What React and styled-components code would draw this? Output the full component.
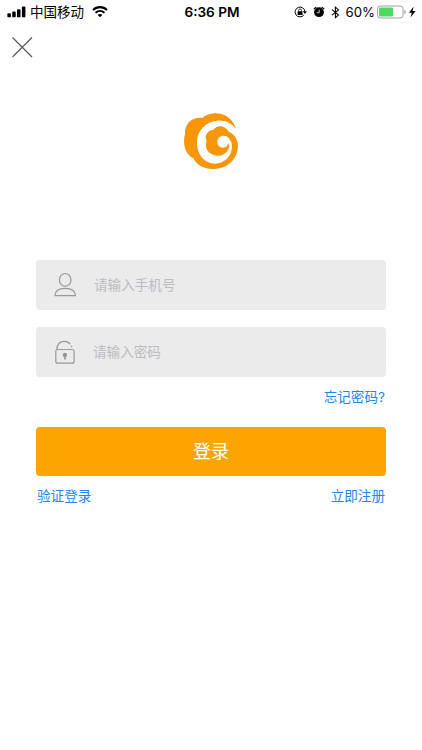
import React from "react"
import styled, { createGlobalStyle } from "styled-components"

const App = () => (
  <Screen>
    <GlobalStyle />
    <StatusBar>
      <Carrier>
        <SignalIcon />
        <span>中国移动</span>
        <WifiIcon />
      </Carrier>
      <Time>6:36 PM</Time>
      <Indicators>
        <RotationLockIcon />
        <AlarmIcon />
        <BluetoothIcon />
        <Percent>60%</Percent>
        <BatteryIcon />
      </Indicators>
    </StatusBar>
    <CloseButton aria-label="关闭">
      <svg width="22" height="22" viewBox="0 0 22 22">
        <path d="M1.5 1.5l19.5 19.5M21 1.5L1.5 21" stroke="#555" strokeWidth="1.1" />
      </svg>
    </CloseButton>
    <Logo />
    <Form onSubmit={e => e.preventDefault()}>
      <Field>
        <UserIcon />
        <Input type="tel" placeholder="请输入手机号" />
      </Field>
      <Field $gap="16px">
        <LockIcon />
        <Input type="password" placeholder="请输入密码" />
      </Field>
      <LinkRow $align="flex-end" $height="40px">
        <TextLink>忘记密码?</TextLink>
      </LinkRow>
      <SubmitButton>登录</SubmitButton>
      <LinkRow $align="space-between" $height="40px">
        <TextLink>验证登录</TextLink>
        <TextLink>立即注册</TextLink>
      </LinkRow>
    </Form>
  </Screen>
)
export default App

const SignalIcon = () => (
  <svg width="20" height="12" viewBox="0 0 20 12">
    <rect x="0.4" y="7.3" width="3.5" height="4" rx="0.9" />
    <rect x="5.2" y="5.6" width="3.5" height="5.7" rx="0.9" />
    <rect x="10" y="3.3" width="3.5" height="8" rx="0.9" />
    <rect x="14.9" y="0.6" width="3.5" height="10.7" rx="0.9" />
  </svg>
)

const WifiIcon = () => (
  <svg width="16" height="12" viewBox="0 0 16 12" fill="none" stroke="#000">
    <path d="M1 4.1C5 .1 11 .1 15 4.1" strokeWidth="2.1" />
    <path d="M3.5 6.8c2.7-2.5 6.3-2.5 9 0" strokeWidth="2" />
    <path d="M5.6 8.9c1.4-1.3 3.4-1.3 4.8 0L8 11.3z" fill="#000" stroke="none" />
  </svg>
)

const RotationLockIcon = () => (
  <svg width="13" height="12" viewBox="0 0 13 12">
    <path
      d="M9.8 9.1A4.9 4.9 0 1 1 10.9 5.8"
      fill="none"
      stroke="#000"
      strokeWidth="1"
    />
    <path d="M8.8 5.3h4.1l-2 2.7z" />
    <rect x="3.6" y="5.3" width="4.9" height="3.6" rx="0.5" />
    <path d="M4.6 5.5V4.4a1.45 1.45 0 0 1 2.9 0v1.1" fill="none" stroke="#000" strokeWidth="0.8" />
  </svg>
)

const AlarmIcon = () => (
  <svg width="12" height="12" viewBox="0 0 12 12">
    <circle cx="6" cy="6.2" r="4.9" />
    <path d="M1.2 2.8L2.9 1.4M10.8 2.8L9.1 1.4" stroke="#000" strokeWidth="1.2" strokeLinecap="round" />
    <path d="M6.2 3.7v3H3.8" fill="none" stroke="#fff" strokeWidth="0.8" />
  </svg>
)

const BluetoothIcon = () => (
  <svg width="9" height="13" viewBox="0 0 9 13">
    <path d="M1 3.7l6.5 5.3-3.1 2.7V1.2l3.1 2.7L1 9.2" fill="none" stroke="#000" strokeWidth="1.05" />
  </svg>
)

const BatteryIcon = () => (
  <svg width="40" height="14" viewBox="0 0 40 14">
    <rect x="0.5" y="1" width="25.5" height="12" rx="2.8" fill="#fff" stroke="#999" strokeWidth="0.9" />
    <rect x="2" y="2.5" width="14" height="9" rx="1.2" fill="#4cd964" />
    <path d="M27.4 4.8c1.7.6 1.7 3.8 0 4.4z" fill="#999" />
    <path d="M36.6 1.6L32 7.7h2.9l-1.4 4.7 5.1-6.3h-3z" />
  </svg>
)

const UserIcon = () => (
  <FieldIcon viewBox="0 0 24 26">
    <ellipse cx="12.2" cy="7.9" rx="5.8" ry="6.4" />
    <path d="M2 23.7c0-4.6 3.5-7.4 10.2-7.4s10.2 2.8 10.2 7.4z" />
  </FieldIcon>
)

const LockIcon = () => (
  <FieldIcon viewBox="0 0 24 26">
    <rect x="2.8" y="10.5" width="18.3" height="13.7" rx="2" />
    <path d="M3.8 10.4C3.8 5.5 6.8 2.3 11.2 2.3c2.5 0 4.7 1 5.9 2.9M18.1 6.8l.9 1.3" />
    <circle cx="11.9" cy="15.9" r="1.6" fill="#8c8c8c" />
    <path d="M11.9 16v4.4" strokeWidth="1.7" />
  </FieldIcon>
)

const Logo = () => (
  <LogoSvg viewBox="0 0 216 216">
    <path d="M183 73C174 40 148 24 119 25C104 26 91 31 82 39C52 35 28 56 30 87C22 118 31 147 55 160C68 184 91 193 117 192C161 191 189 160 189 121C188 102 178 87 161 80C151 61 128 58 115 74C97 76 87 92 95 108C88 126 98 144 114 149C134 158 156 147 162 128C165 121 163 112 158 107L168 108C179 143 155 175 121 176C86 175 65 146 66 110C67 75 94 49 127 47C151 45 171 55 183 73Z" />
    <path
      d="M169 118C167 102 158 92 146 92C135 92 127 100 127 111C127 121 134 128 143 128C153 128 159 122 159 114L163 124Z"
      fill="#fff"
    />
  </LogoSvg>
)

const GlobalStyle = createGlobalStyle`
  body {
    margin: 0;
    background: #fff;
  }
  * {
    box-sizing: border-box;
  }
`

const Screen = styled.div`
  width: 422px;
  height: 750px;
  overflow: hidden;
  background: #fff;
  color: #000;
  font-family: Inter, "Noto Sans CJK SC", sans-serif;

  svg {
    display: block;
    flex: none;
  }
`

const StatusBar = styled.header`
  display: grid;
  grid-template-columns: 1fr auto 1fr;
  align-items: center;
  height: 24px;
  padding: 0 5px 0 7px;
  font-size: 13.5px;
  line-height: 24px;
`

const Carrier = styled.div`
  display: flex;
  align-items: center;

  span {
    margin: 0 8px 0 3px;
    white-space: nowrap;
  }
`

const Time = styled.div`
  font-size: 13.6px;
  font-weight: 600;
`

const Indicators = styled.div`
  display: flex;
  align-items: center;
  justify-content: flex-end;
  gap: 6px;
`

const Percent = styled.span`
  margin-right: -4px;
  font-size: 13.2px;
`

const CloseButton = styled.button`
  display: block;
  margin: 12px 0 0 11px;
  padding: 0;
  border: 0;
  background: none;
`

const LogoSvg = styled.svg`
  width: 72px;
  height: 72px;
  margin: 47px 0 0 175px;
  fill: #f8960a;
`

const Form = styled.form`
  width: 350px;
  margin: 83px 0 0 36px;
`

const Field = styled.label`
  display: flex;
  align-items: center;
  gap: ${({ $gap }) => $gap || "17px"};
  height: 50px;
  padding: 0 17px;
  border-radius: 4px;
  background: #ebebeb;

  & + & {
    margin-top: 17px;
  }
`

const FieldIcon = styled.svg`
  width: 24px;
  height: 26px;
  fill: none;
  stroke: #999;
  stroke-width: 1.2;
`

const Input = styled.input`
  flex: 1;
  min-width: 0;
  padding: 0;
  border: 0;
  outline: 0;
  background: none;
  font: 13.6px/20px Inter, "Noto Sans CJK SC", sans-serif;

  &::placeholder {
    color: #bbbbc1;
  }
`

const LinkRow = styled.div`
  display: flex;
  align-items: center;
  justify-content: ${({ $align }) => $align};
  height: ${({ $height }) => $height};
  padding: 0 1px;
`

const TextLink = styled.a`
  color: #2385ee;
  font-size: 13.6px;
  line-height: 20px;
  cursor: pointer;
`

const SubmitButton = styled.button`
  display: block;
  width: 100%;
  height: 49px;
  margin-top: 10px;
  padding: 0 0 3px;
  border: 0;
  border-radius: 4px;
  background: #fca400;
  color: #fff;
  font: 18px/26px "Noto Sans CJK SC", sans-serif;
`
